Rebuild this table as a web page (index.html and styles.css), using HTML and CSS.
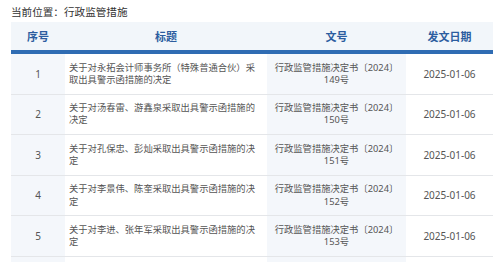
FILE: index.html
```html
<!DOCTYPE html>
<html lang="zh-CN">
<head>
<meta charset="utf-8">
<title>行政监管措施</title>
<link rel="stylesheet" href="styles.css">
</head>
<body>
<div class="page">
  <div class="crumb">当前位置：行政监管措施</div>
  <table class="list">
    <colgroup>
      <col class="c-no">
      <col class="c-title">
      <col class="c-doc">
      <col class="c-date">
    </colgroup>
    <thead>
      <tr>
        <th>序号</th>
        <th>标题</th>
        <th>文号</th>
        <th>发文日期</th>
      </tr>
    </thead>
    <tbody>
      <tr>
        <td class="no">1</td>
        <td class="title">关于对永拓会计师事务所（特殊普通合伙）采取出具警示函措施的决定</td>
        <td class="doc">行政监管措施决定书〔2024〕<br>149号</td>
        <td class="date">2025-01-06</td>
      </tr>
      <tr>
        <td class="no">2</td>
        <td class="title">关于对汤春雷、游鑫泉采取出具警示函措施的决定</td>
        <td class="doc">行政监管措施决定书〔2024〕<br>150号</td>
        <td class="date">2025-01-06</td>
      </tr>
      <tr>
        <td class="no">3</td>
        <td class="title">关于对孔保忠、彭灿采取出具警示函措施的决定</td>
        <td class="doc">行政监管措施决定书〔2024〕<br>151号</td>
        <td class="date">2025-01-06</td>
      </tr>
      <tr>
        <td class="no">4</td>
        <td class="title">关于对李景伟、陈奎采取出具警示函措施的决定</td>
        <td class="doc">行政监管措施决定书〔2024〕<br>152号</td>
        <td class="date">2025-01-06</td>
      </tr>
      <tr>
        <td class="no">5</td>
        <td class="title">关于对李进、张年军采取出具警示函措施的决定</td>
        <td class="doc">行政监管措施决定书〔2024〕<br>153号</td>
        <td class="date">2025-01-06</td>
      </tr>
      <tr>
        <td class="no"></td>
        <td class="title"></td>
        <td class="doc"></td>
        <td class="date"></td>
      </tr>
    </tbody>
  </table>
</div>
</body>
</html>
```

FILE: styles.css
```css
html, body {
  margin: 0;
  padding: 0;
  background: #ffffff;
}

body {
  font-family: "Noto Sans", "Noto Sans CJK SC", sans-serif;
  color: #555555;
}

.page {
  padding: 5px 7px 0 11px;
}

.crumb {
  font-size: 10.6px;
  line-height: 14px;
  color: #333333;
  margin-bottom: 3px;
}

.list {
  width: 482px;
  border-collapse: collapse;
  table-layout: fixed;
}

.c-no { width: 54px; }
.c-title { width: 202px; }
.c-doc { width: 139px; }
.c-date { width: 87px; }

.list th {
  height: 28px;
  padding: 0;
  background: #f2f6fa;
  color: #2c5d9f;
  font-size: 11px;
  font-weight: bold;
  text-align: center;
  border-bottom: 4px solid #2f6cb3;
}

.list td {
  height: 39.6px;
  padding: 0 4px;
  font-size: 9.3px;
  line-height: 12.3px;
  border-bottom: 1px solid #e4e6e9;
  vertical-align: middle;
}

.list td.no {
  text-align: center;
  background: #f4f7fb;
  font-size: 10px;
}

.list td.title {
  text-align: left;
  padding-right: 7px;
}

.list td.doc {
  text-align: center;
  background: #f4f7fb;
}

.list td.date {
  text-align: center;
  font-size: 10px;
}
```
